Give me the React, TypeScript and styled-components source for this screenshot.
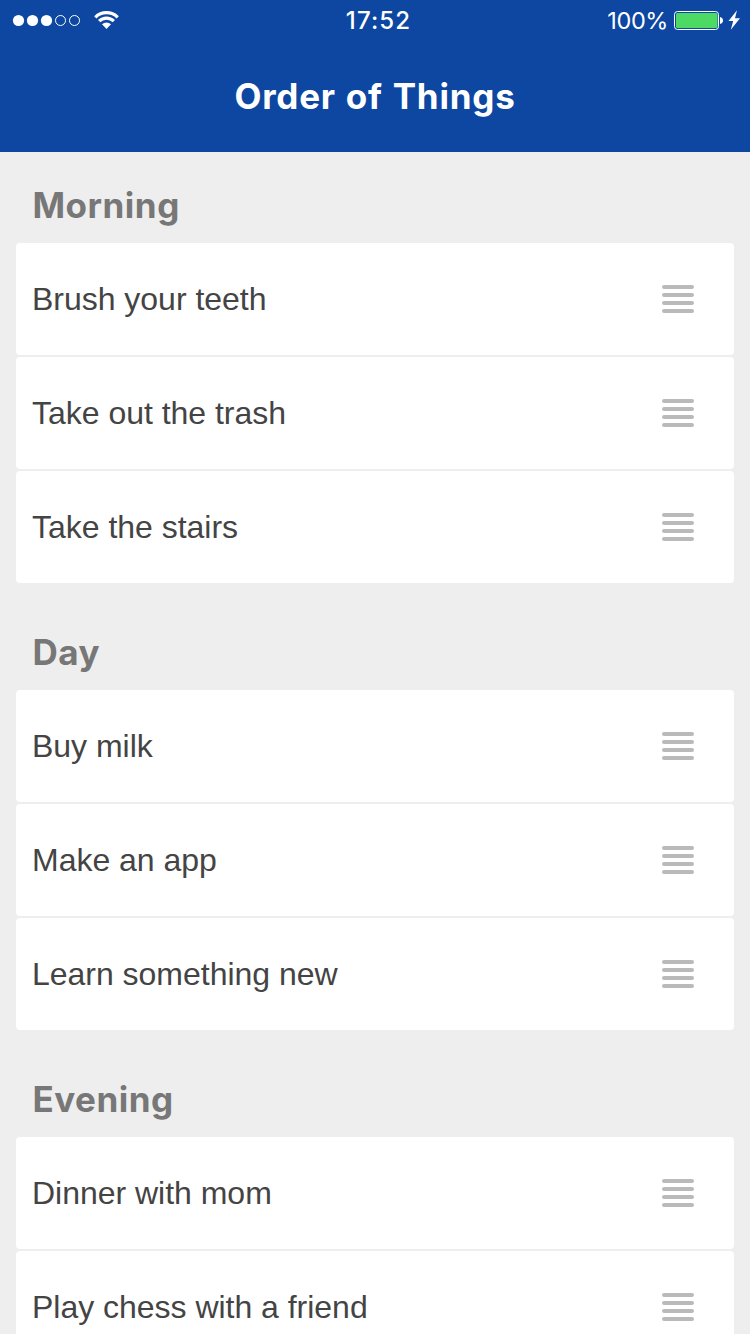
import React from 'react';
import styled, { createGlobalStyle } from 'styled-components';

const GlobalStyle = createGlobalStyle`
  * { box-sizing: border-box; }
  body { margin: 0; background: #eeeeee; overflow: hidden; -webkit-font-smoothing: antialiased; }
`;
const Screen = styled.div`
  width: 750px; height: 1334px; overflow: hidden; background: #eeeeee;
  font-family: 'Liberation Sans', Arial, sans-serif;
`;
const Header = styled.header`
  height: 152px; background: #0d47a1; color: #fff; font-family: Inter, sans-serif;
`;
const StatusBar = styled.div`
  height: 40px; display: grid; grid-template-columns: 1fr auto 1fr; align-items: center;
  padding: 0 10px 0 12px; line-height: 38px;
`;
const Signal = styled.div`
  display: flex; align-items: center;
`;
const Clock = styled.span`
  padding: 2px 0 0 5px; font-size: 24px; font-weight: 500; letter-spacing: 1.1px;
`;
const Power = styled.div`
  display: flex; align-items: center; justify-content: flex-end; gap: 6px;
`;
const Charge = styled.span`
  padding-top: 2px; font-size: 23.5px; letter-spacing: -0.4px;
`;
const Title = styled.h1`
  margin: 0; height: 112px; line-height: 113px; text-align: center;
  font-size: 35px; font-weight: 700; letter-spacing: 0.8px; word-spacing: 0.8px;
`;
const Section = styled.section`
  padding: 0 16px; margin-bottom: 16px;
`;
const SectionTitle = styled.h2`
  margin: 0; height: 91px; padding: 31px 0 0 16.5px; color: #777777;
  font: 700 35px/44px Inter, sans-serif; letter-spacing: 0.5px;
`;
const List = styled.ul`
  margin: 0; padding: 0; list-style: none; display: flex; flex-direction: column; gap: 2px;
`;
const Row = styled.li`
  height: 112px; flex: none; display: flex; align-items: center; justify-content: space-between;
  padding: 0 40px 0 16px; background: #fff; border-radius: 4px; color: #444444;
  font-size: 32px; letter-spacing: -0.02px;
`;
const Handle = styled.div`
  width: 32px; display: flex; flex-direction: column; gap: 4px;
`;
const Bar = styled.span`
  height: 4px; border-radius: 2px; background: #bababa;
`;

const sections = [
  { title: 'Morning', items: ['Brush your teeth', 'Take out the trash', 'Take the stairs'] },
  { title: 'Day', items: ['Buy milk', 'Make an app', 'Learn something new'] },
  { title: 'Evening', items: ['Dinner with mom', 'Play chess with a friend'] },
];

export default function App() {
  return (
    <Screen>
      <GlobalStyle />
      <Header>
        <StatusBar>
          <Signal>
            <svg width="110" height="24" viewBox="12 8 110 24" fill="#fff">
              {[18.5, 32.5, 46.5].map(x => <circle key={x} cx={x} cy="20.5" r="5.6" />)}
              {[60.5, 74.5].map(x => <circle key={x} cx={x} cy="20.5" r="5" fill="none" stroke="#fff" />)}
              <g fill="none" stroke="#fff" strokeWidth="3.2">
                <path d="M95.3 17.3a15.9 15.9 0 0 1 22.4 0M99.15 21.15a10.4 10.4 0 0 1 14.7 0" />
              </g>
              <path d="M102 24.3a6.3 6.3 0 0 1 9 0l-4.5 4.6z" />
            </svg>
          </Signal>
          <Clock>17:52</Clock>
          <Power>
            <Charge>100%</Charge>
            <svg width="66" height="24" viewBox="674 8 66 24">
              <rect x="674.5" y="11.5" width="44" height="18" rx="3" fill="none" stroke="#fff" />
              <rect x="676" y="13" width="41.5" height="15" rx="1.5" fill="#4cd964" />
              <path d="M720 17q3 .6 3 3.5t-3 3.5z" fill="#fff" />
              <path d="M737 10.2l-8.5 10.8h4.7l-2.4 8.8 9.2-11.6h-5z" fill="#fff" />
            </svg>
          </Power>
        </StatusBar>
        <Title>Order of Things</Title>
      </Header>
      {sections.map(s => (
        <Section key={s.title}>
          <SectionTitle>{s.title}</SectionTitle>
          <List>
            {s.items.map(item => (
              <Row key={item}>
                <span>{item}</span>
                <Handle><Bar /><Bar /><Bar /><Bar /></Handle>
              </Row>
            ))}
          </List>
        </Section>
      ))}
    </Screen>
  );
}
